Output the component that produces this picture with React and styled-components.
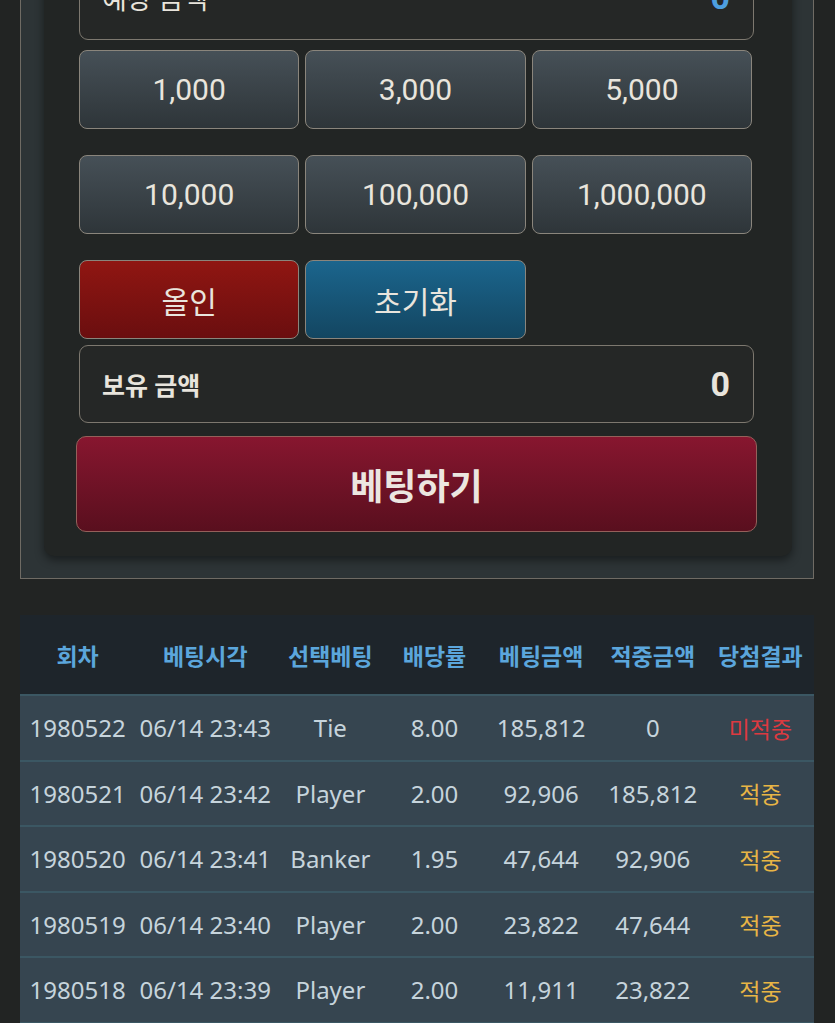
import React from 'react'
import styled, { createGlobalStyle, css } from 'styled-components'

const GlobalStyle = createGlobalStyle`
  html, body {
    margin: 0;
    padding: 0;
    background: #222423;
  }
  body {
    font-family: Roboto, "Noto Sans CJK KR", sans-serif;
    overflow: hidden;
  }
  * {
    box-sizing: border-box;
  }
`

const Page = styled.div`
  margin-top: -81px;
  padding: 0 21px 0 20px;
`

const Panel = styled.section`
  border: 1px solid #6f6b64;
  background: #2d3436;
  padding: 22px 21px 22px 23px;
`

const Card = styled.div`
  display: flex;
  flex-direction: column;
  background: #222524;
  border-radius: 10px;
  box-shadow: 0 4px 10px rgba(0, 0, 0, 0.45);
  padding: 20px 38px 24px 35px;
`

const AmountBox = styled.div`
  display: flex;
  align-items: center;
  justify-content: space-between;
  height: 78px;
  padding: 0 23px ${({ $lift }) => $lift || 0}px 22px;
  border: 1.5px solid #7d786f;
  border-radius: 9px;
  background: #252726;
  margin-bottom: ${({ $gap }) => $gap}px;
`

const AmountLabel = styled.span`
  color: #e8e4dc;
  font-size: ${({ $bold }) => ($bold ? 25 : 27)}px;
  font-weight: ${({ $bold }) => ($bold ? 700 : 400)};
`

const AmountValue = styled.span`
  color: ${({ $accent }) => ($accent ? '#4d9fe0' : '#e8e4dc')};
  font-size: 34px;
  font-weight: 700;
`

const ChipGrid = styled.div`
  display: grid;
  grid-template-columns: repeat(3, 1fr);
  grid-auto-rows: 79px;
  gap: 26px 6px;
  margin: 0 2px 6px 0;
`

const tones = {
  chip: css`
    background: linear-gradient(#465057, #2e3539);
    font-size: 30px;
  `,
  red: css`
    background: linear-gradient(#901612, #6a0e0f);
    font-size: 30px;
  `,
  blue: css`
    background: linear-gradient(#1b658d, #134661);
    font-size: 30px;
  `,
}

const Chip = styled.button`
  border: 1.5px solid #8a857c;
  border-radius: 8px;
  color: #e9e5dd;
  font-family: Roboto, "Noto Sans CJK KR", sans-serif;
  font-weight: 400;
  padding: 0;
  cursor: pointer;
  ${({ $tone }) => tones[$tone || 'chip']}
`

const BetButton = styled.button`
  margin: 0 -3px;
  height: 96px;
  border: 1.5px solid #94605a;
  border-radius: 10px;
  background: linear-gradient(#87162f, #590f1e);
  color: #ece6e0;
  font-family: Roboto, "Noto Sans CJK KR", sans-serif;
  font-size: 36px;
  font-weight: 700;
  cursor: pointer;
`

const History = styled.table`
  width: 100%;
  margin-top: 36px;
  border-collapse: collapse;
  table-layout: fixed;
`

const Col = styled.col`
  width: ${({ $w }) => $w}px;
`

const Th = styled.th`
  height: 80px;
  padding: 0;
  background: #1e252b;
  color: #5ba6dc;
  font-family: "Noto Sans CJK KR", sans-serif;
  font-size: 23px;
  font-weight: 700;
  text-align: center;
  white-space: nowrap;
`

const resultColors = {
  win: '#e8b545',
  lose: '#dc3a40',
}

const Td = styled.td`
  height: 65.5px;
  padding: 0;
  background: #364550;
  border-top: 2px solid #3b5763;
  color: ${({ $result }) => resultColors[$result] || '#c6d4dc'};
  font-family: "Noto Sans", "Noto Sans CJK KR", sans-serif;
  font-size: ${({ $result }) => ($result ? 23 : 24)}px;
  text-align: center;
  white-space: nowrap;
`

const chips = ['1,000', '3,000', '5,000', '10,000', '100,000', '1,000,000']

const columns = [
  { title: '회차', w: 115 },
  { title: '베팅시각', w: 140 },
  { title: '선택베팅', w: 110 },
  { title: '배당률', w: 98 },
  { title: '베팅금액', w: 115 },
  { title: '적중금액', w: 108 },
  { title: '당첨결과', w: 107 },
]

const rows = [
  ['1980522', '06/14 23:43', 'Tie', '8.00', '185,812', '0', 'lose'],
  ['1980521', '06/14 23:42', 'Player', '2.00', '92,906', '185,812', 'win'],
  ['1980520', '06/14 23:41', 'Banker', '1.95', '47,644', '92,906', 'win'],
  ['1980519', '06/14 23:40', 'Player', '2.00', '23,822', '47,644', 'win'],
  ['1980518', '06/14 23:39', 'Player', '2.00', '11,911', '23,822', 'win'],
  ['1980517', '06/14 23:38', 'Player', '2.00', '5,955', '11,911', 'win'],
]

const App = () => (
  <Page>
    <GlobalStyle />
    <Panel>
      <Card>
        <AmountBox $gap={10} $lift={8}>
          <AmountLabel>예상 금액</AmountLabel>
          <AmountValue $accent>0</AmountValue>
        </AmountBox>
        <ChipGrid>
          {chips.map(c => (
            <Chip key={c}>{c}</Chip>
          ))}
          <Chip $tone="red">올인</Chip>
          <Chip $tone="blue">초기화</Chip>
        </ChipGrid>
        <AmountBox $gap={13}>
          <AmountLabel $bold>보유 금액</AmountLabel>
          <AmountValue>0</AmountValue>
        </AmountBox>
        <BetButton>베팅하기</BetButton>
      </Card>
    </Panel>
    <History>
      <colgroup>
        {columns.map(c => (
          <Col key={c.title} $w={c.w} />
        ))}
      </colgroup>
      <thead>
        <tr>
          {columns.map(c => (
            <Th key={c.title}>{c.title}</Th>
          ))}
        </tr>
      </thead>
      <tbody>
        {rows.map(([round, time, pick, odds, bet, win, result]) => (
          <tr key={round}>
            <Td>{round}</Td>
            <Td>{time}</Td>
            <Td>{pick}</Td>
            <Td>{odds}</Td>
            <Td>{bet}</Td>
            <Td>{win}</Td>
            <Td $result={result}>{result === 'win' ? '적중' : '미적중'}</Td>
          </tr>
        ))}
      </tbody>
    </History>
  </Page>
)

export default App
